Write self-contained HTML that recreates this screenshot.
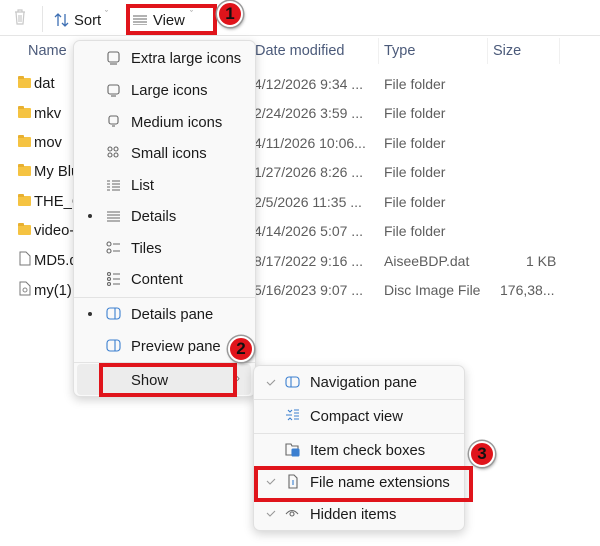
<!DOCTYPE html><html><head><style>
*{margin:0;padding:0;box-sizing:border-box}
body{width:600px;height:546px;background:#fff;font-family:"Liberation Sans",sans-serif;position:relative;overflow:hidden;color:#1a1a1a}
.a{position:absolute;white-space:nowrap}
.t{font-size:14.8px}
.g{color:#5d5d5d;font-size:14px}
.h{color:#4b5a7a;font-size:14.5px}
.menu{position:absolute;background:#f9f9f9;border:1px solid #e0e0e0;border-radius:7px;box-shadow:0 3px 10px rgba(0,0,0,.18)}
.sep{position:absolute;height:1px;background:#e3e3e3}
.red{position:absolute;border:4px solid #e0141b}
.badge{position:absolute;width:26px;height:26px;border-radius:50%;background:#e0141b;border:2px solid #fff;box-shadow:0 0 0 1.5px #999,1px 2px 3px rgba(0,0,0,.4);color:#111;font-weight:bold;font-size:17px;text-align:center;line-height:22px}
.fold{position:absolute;width:13px;height:10px;background:#f5c342;border-radius:1px}
.fold:before{content:"";position:absolute;left:0;top:-2px;width:6px;height:3px;background:#e8b030;border-radius:1px 1px 0 0}
</style></head><body>
<svg class="a" style="left:13px;top:9px" width="14" height="16"><path d="M2 3h10M5 3V1h4v2M3 3l1 12h6l1-12M6 6v7M8 6v7" stroke="#c8c8c8" fill="none" stroke-width="1.2"/></svg>
<div class="a" style="left:42px;top:6px;width:1px;height:26px;background:#e5e5e5"></div>
<div class="a" style="left:0;top:35px;width:600px;height:1px;background:#e5e5e5"></div>
<svg class="a" style="left:54px;top:13px" width="16" height="14"><path d="M4 13V1M1 4l3-3 3 3M11 1v12M8 10l3 3 3-3" stroke="#3d6fb3" fill="none" stroke-width="1.3"/></svg>
<div class="a t" style="left:74px;top:13px">Sort</div><div class="a" style="left:105px;top:9px;font-size:9px;color:#888">ˇ</div>
<svg class="a" style="left:133px;top:15px" width="14" height="10"><path d="M0 1h14M0 4h14M0 7h14M0 10h14" stroke="#666" stroke-width="1"/></svg>
<div class="a t" style="left:153px;top:13px">View</div><div class="a" style="left:190px;top:9px;font-size:9px;color:#888">ˇ</div>
<div class="red" style="left:126px;top:4px;width:91px;height:31px"></div>
<div class="badge" style="left:217px;top:1px">1</div>
<div class="a h" style="left:28px;top:43px">Name</div>
<div class="a h" style="left:255px;top:43px">Date modified</div>
<div class="a h" style="left:384px;top:43px">Type</div>
<div class="a h" style="left:493px;top:43px">Size</div>
<div class="a" style="left:378px;top:38px;width:1px;height:26px;background:#f0f0f0"></div>
<div class="a" style="left:487px;top:38px;width:1px;height:26px;background:#f0f0f0"></div>
<div class="a" style="left:559px;top:38px;width:1px;height:26px;background:#f0f0f0"></div>
<div class="fold" style="left:18px;top:78px"></div><div class="a t" style="left:34px;top:76px">dat</div>
<div class="fold" style="left:18px;top:108px"></div><div class="a t" style="left:34px;top:106px">mkv</div>
<div class="fold" style="left:18px;top:137px"></div><div class="a t" style="left:34px;top:135px">mov</div>
<div class="fold" style="left:18px;top:166px"></div><div class="a t" style="left:34px;top:164px">My Blu</div>
<div class="fold" style="left:18px;top:196px"></div><div class="a t" style="left:34px;top:194px">THE_C</div>
<div class="fold" style="left:18px;top:225px"></div><div class="a t" style="left:34px;top:223px">video-</div>
<svg class="a" style="left:19px;top:251px" width="12" height="15"><path d="M1 1h6l4 4v9H1z" stroke="#777" fill="#fff"/></svg><div class="a t" style="left:34px;top:253px">MD5.d</div>
<svg class="a" style="left:19px;top:281px" width="12" height="15"><path d="M1 1h6l4 4v9H1z" stroke="#777" fill="#fff"/><circle cx="6" cy="9" r="2" stroke="#888" fill="none"/></svg><div class="a t" style="left:34px;top:283px">my(1).</div>
<div class="a g" style="left:254px;top:76px">4/12/2026 9:34 ...</div><div class="a g" style="left:384px;top:76px">File folder</div>
<div class="a g" style="left:254px;top:105px">2/24/2026 3:59 ...</div><div class="a g" style="left:384px;top:105px">File folder</div>
<div class="a g" style="left:254px;top:135px">4/11/2026 10:06...</div><div class="a g" style="left:384px;top:135px">File folder</div>
<div class="a g" style="left:254px;top:164px">1/27/2026 8:26 ...</div><div class="a g" style="left:384px;top:164px">File folder</div>
<div class="a g" style="left:254px;top:194px">2/5/2026 11:35 ...</div><div class="a g" style="left:384px;top:194px">File folder</div>
<div class="a g" style="left:254px;top:223px">4/14/2026 5:07 ...</div><div class="a g" style="left:384px;top:223px">File folder</div>
<div class="a g" style="left:254px;top:253px">8/17/2022 9:16 ...</div><div class="a g" style="left:384px;top:253px">AiseeBDP.dat</div><div class="a g" style="left:526px;top:253px">1 KB</div>
<div class="a g" style="left:254px;top:282px">5/16/2023 9:07 ...</div><div class="a g" style="left:384px;top:282px">Disc Image File</div><div class="a g" style="left:500px;top:282px">176,38...</div>
<div class="menu" style="left:73px;top:40px;width:183px;height:357px"></div>
<div class="a" style="left:77px;top:364px;width:174px;height:31px;background:#ececec;border-radius:4px"></div>
<div class="sep" style="left:74px;top:297px;width:181px"></div>
<div class="sep" style="left:74px;top:362px;width:181px"></div>
<svg class="a" style="left:106px;top:50px;overflow:visible" width="16" height="320" fill="none" stroke="#666" stroke-width="1.1">
<rect x="2" y="2" width="11" height="10" rx="2"/><path d="M4 14h7"/>
<rect x="2" y="35" width="11" height="9" rx="2"/><path d="M5 46h5"/>
<rect x="3" y="66" width="9" height="8" rx="2"/><path d="M6 76h3"/>
<circle cx="4" cy="99" r="2"/><circle cx="10" cy="99" r="2"/><circle cx="4" cy="105" r="2"/><circle cx="10" cy="105" r="2"/>
<path d="M1 131h3M6 131h8M1 134h3M6 134h8M1 137h3M6 137h8M1 140h3M6 140h8"/>
<path d="M1 162h13M1 165h13M1 168h13M1 171h13"/>
<circle cx="3" cy="194" r="2"/><circle cx="3" cy="201" r="2"/><path d="M7 194h7M7 201h7"/>
<circle cx="3" cy="224" r="1.5"/><circle cx="3" cy="229" r="1.5"/><circle cx="3" cy="234" r="1.5"/><path d="M7 224h7M7 229h7M7 234h7"/>
<rect x="1" y="258" width="13" height="11" rx="3" stroke="#3b7fd0"/><path d="M9 258v11" stroke="#3b7fd0"/>
<rect x="1" y="290" width="13" height="11" rx="3" stroke="#3b7fd0"/><path d="M9 290v11" stroke="#3b7fd0"/>
</svg>
<div class="a t" style="left:131px;top:51px">Extra large icons</div>
<div class="a t" style="left:131px;top:83px">Large icons</div>
<div class="a t" style="left:131px;top:115px">Medium icons</div>
<div class="a t" style="left:131px;top:146px">Small icons</div>
<div class="a t" style="left:131px;top:178px">List</div>
<div class="a" style="left:88px;top:214px;width:4px;height:4px;border-radius:50%;background:#333"></div>
<div class="a t" style="left:131px;top:209px">Details</div>
<div class="a t" style="left:131px;top:241px">Tiles</div>
<div class="a t" style="left:131px;top:272px">Content</div>
<div class="a" style="left:88px;top:312px;width:4px;height:4px;border-radius:50%;background:#333"></div>
<div class="a t" style="left:131px;top:307px">Details pane</div>
<div class="a t" style="left:131px;top:339px">Preview pane</div>
<div class="a t" style="left:131px;top:373px">Show</div>
<div class="a" style="left:236px;top:371px;font-size:12px;color:#777">›</div>
<div class="red" style="left:99px;top:363px;width:138px;height:34px"></div>
<div class="badge" style="left:228px;top:336px">2</div>
<div class="menu" style="left:253px;top:365px;width:212px;height:166px"></div>
<div class="sep" style="left:254px;top:399px;width:210px"></div>
<div class="sep" style="left:254px;top:433px;width:210px"></div>
<div class="sep" style="left:254px;top:467px;width:210px"></div>
<svg class="a" style="left:265px;top:375px;overflow:visible" width="50" height="150" fill="none" stroke-width="1.1">
<path d="M2 7l3 3 5-5M2 106l3 3 5-5M2 138l3 3 5-5" stroke="#999"/>
<rect x="21" y="2" width="13" height="10" rx="3" stroke="#3b7fd0"/><path d="M26 2v10" stroke="#3b7fd0"/>
<path d="M23 35l2 2 2-2M23 45l2-2 2 2M21 40h6M29 35h5M29 38h5M29 41h5M29 44h5" stroke="#3b7fd0"/>
<path d="M21 69h5l1 2h6v9H21z" stroke="#666"/><rect x="27" y="74" width="7" height="7" rx="1" fill="#3b7fd0" stroke="#3b7fd0"/>
<path d="M24 100h5l3 3v10h-8z" stroke="#666"/><path d="M28 105v5" stroke="#3b7fd0"/>
<path d="M21 139q6-7 12 0" stroke="#666"/><circle cx="27" cy="139" r="2" stroke="#666"/>
</svg>
<div class="a t" style="left:310px;top:375px">Navigation pane</div>
<div class="a t" style="left:310px;top:409px">Compact view</div>
<div class="a t" style="left:310px;top:443px">Item check boxes</div>
<div class="a t" style="left:310px;top:475px">File name extensions</div>
<div class="a t" style="left:310px;top:507px">Hidden items</div>
<div class="red" style="left:254px;top:466px;width:219px;height:36px"></div>
<div class="badge" style="left:469px;top:441px">3</div>
</body></html>
